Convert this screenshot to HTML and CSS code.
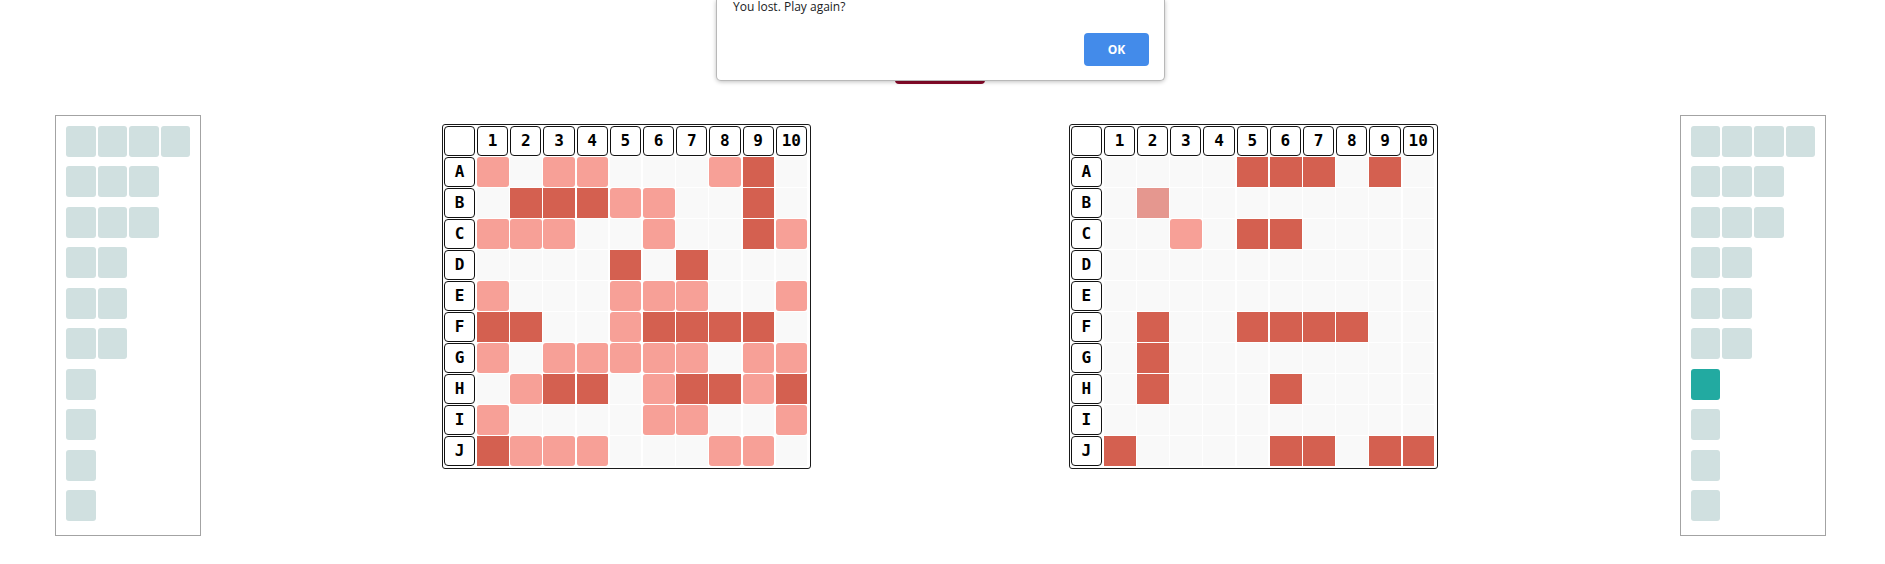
FILE: index.html
```html
<!DOCTYPE html>
<html>
<head>
<meta charset="utf-8">
<link rel="stylesheet" href="styles.css">
</head>
<body>
<div class="top"><button class="play">Play</button></div>

<div class="dialog">
  <div class="msg">You lost. Play again?</div>
  <div class="actions"><button class="ok">OK</button></div>
</div>

<div class="main">
  <div class="panel">
    <div class="ship"><i></i><i></i><i></i><i></i></div>
    <div class="ship"><i></i><i></i><i></i></div>
    <div class="ship"><i></i><i></i><i></i></div>
    <div class="ship"><i></i><i></i></div>
    <div class="ship"><i></i><i></i></div>
    <div class="ship"><i></i><i></i></div>
    <div class="ship"><i></i></div>
    <div class="ship"><i></i></div>
    <div class="ship"><i></i></div>
    <div class="ship"><i></i></div>
  </div>

  <div class="board board-left">
    <div class="hd"></div><div class="hd">1</div><div class="hd">2</div><div class="hd">3</div><div class="hd">4</div><div class="hd">5</div><div class="hd">6</div><div class="hd">7</div><div class="hd">8</div><div class="hd">9</div><div class="hd">10</div>
    <div class="hd">A</div><div class="c m"></div><div class="c"></div><div class="c m"></div><div class="c m"></div><div class="c"></div><div class="c"></div><div class="c"></div><div class="c m"></div><div class="c h"></div><div class="c"></div>
    <div class="hd">B</div><div class="c"></div><div class="c h"></div><div class="c h"></div><div class="c h"></div><div class="c m"></div><div class="c m"></div><div class="c"></div><div class="c"></div><div class="c h"></div><div class="c"></div>
    <div class="hd">C</div><div class="c m"></div><div class="c m"></div><div class="c m"></div><div class="c"></div><div class="c"></div><div class="c m"></div><div class="c"></div><div class="c"></div><div class="c h"></div><div class="c m"></div>
    <div class="hd">D</div><div class="c"></div><div class="c"></div><div class="c"></div><div class="c"></div><div class="c h"></div><div class="c"></div><div class="c h"></div><div class="c"></div><div class="c"></div><div class="c"></div>
    <div class="hd">E</div><div class="c m"></div><div class="c"></div><div class="c"></div><div class="c"></div><div class="c m"></div><div class="c m"></div><div class="c m"></div><div class="c"></div><div class="c"></div><div class="c m"></div>
    <div class="hd">F</div><div class="c h"></div><div class="c h"></div><div class="c"></div><div class="c"></div><div class="c m"></div><div class="c h"></div><div class="c h"></div><div class="c h"></div><div class="c h"></div><div class="c"></div>
    <div class="hd">G</div><div class="c m"></div><div class="c"></div><div class="c m"></div><div class="c m"></div><div class="c m"></div><div class="c m"></div><div class="c m"></div><div class="c"></div><div class="c m"></div><div class="c m"></div>
    <div class="hd">H</div><div class="c"></div><div class="c m"></div><div class="c h"></div><div class="c h"></div><div class="c"></div><div class="c m"></div><div class="c h"></div><div class="c h"></div><div class="c m"></div><div class="c h"></div>
    <div class="hd">I</div><div class="c m"></div><div class="c"></div><div class="c"></div><div class="c"></div><div class="c"></div><div class="c m"></div><div class="c m"></div><div class="c"></div><div class="c"></div><div class="c m"></div>
    <div class="hd">J</div><div class="c h"></div><div class="c m"></div><div class="c m"></div><div class="c m"></div><div class="c"></div><div class="c"></div><div class="c"></div><div class="c m"></div><div class="c m"></div><div class="c"></div>
  </div>

  <div class="board board-right">
    <div class="hd"></div><div class="hd">1</div><div class="hd">2</div><div class="hd">3</div><div class="hd">4</div><div class="hd">5</div><div class="hd">6</div><div class="hd">7</div><div class="hd">8</div><div class="hd">9</div><div class="hd">10</div>
    <div class="hd">A</div><div class="c"></div><div class="c"></div><div class="c"></div><div class="c"></div><div class="c h"></div><div class="c h"></div><div class="c h"></div><div class="c"></div><div class="c h"></div><div class="c"></div>
    <div class="hd">B</div><div class="c"></div><div class="c s"></div><div class="c"></div><div class="c"></div><div class="c"></div><div class="c"></div><div class="c"></div><div class="c"></div><div class="c"></div><div class="c"></div>
    <div class="hd">C</div><div class="c"></div><div class="c"></div><div class="c m"></div><div class="c"></div><div class="c h"></div><div class="c h"></div><div class="c"></div><div class="c"></div><div class="c"></div><div class="c"></div>
    <div class="hd">D</div><div class="c"></div><div class="c"></div><div class="c"></div><div class="c"></div><div class="c"></div><div class="c"></div><div class="c"></div><div class="c"></div><div class="c"></div><div class="c"></div>
    <div class="hd">E</div><div class="c"></div><div class="c"></div><div class="c"></div><div class="c"></div><div class="c"></div><div class="c"></div><div class="c"></div><div class="c"></div><div class="c"></div><div class="c"></div>
    <div class="hd">F</div><div class="c"></div><div class="c h"></div><div class="c"></div><div class="c"></div><div class="c h"></div><div class="c h"></div><div class="c h"></div><div class="c h"></div><div class="c"></div><div class="c"></div>
    <div class="hd">G</div><div class="c"></div><div class="c h"></div><div class="c"></div><div class="c"></div><div class="c"></div><div class="c"></div><div class="c"></div><div class="c"></div><div class="c"></div><div class="c"></div>
    <div class="hd">H</div><div class="c"></div><div class="c h"></div><div class="c"></div><div class="c"></div><div class="c"></div><div class="c h"></div><div class="c"></div><div class="c"></div><div class="c"></div><div class="c"></div>
    <div class="hd">I</div><div class="c"></div><div class="c"></div><div class="c"></div><div class="c"></div><div class="c"></div><div class="c"></div><div class="c"></div><div class="c"></div><div class="c"></div><div class="c"></div>
    <div class="hd">J</div><div class="c h"></div><div class="c"></div><div class="c"></div><div class="c"></div><div class="c"></div><div class="c h"></div><div class="c h"></div><div class="c"></div><div class="c h"></div><div class="c h"></div>
  </div>

  <div class="panel panel-right">
    <div class="ship"><i></i><i></i><i></i><i></i></div>
    <div class="ship"><i></i><i></i><i></i></div>
    <div class="ship"><i></i><i></i><i></i></div>
    <div class="ship"><i></i><i></i></div>
    <div class="ship"><i></i><i></i></div>
    <div class="ship"><i></i><i></i></div>
    <div class="ship"><i class="active"></i></div>
    <div class="ship"><i></i></div>
    <div class="ship"><i></i></div>
    <div class="ship"><i></i></div>
  </div>
</div>
</body>
</html>
```

FILE: styles.css
```css
* { box-sizing: border-box; }

html, body {
  margin: 0;
  padding: 0;
  background: #ffffff;
}

body {
  width: 1885px;
  height: 564px;
  overflow: hidden;
  position: relative;
  font-family: "Open Sans", "Noto Sans", sans-serif;
}

.top {
  display: flex;
  justify-content: center;
  padding-top: 47px;
}

.play {
  width: 90px;
  height: 37px;
  margin-right: 5px;
  border: none;
  border-radius: 4px;
  background: #890a2a;
  color: #fff;
  font-family: "Open Sans", sans-serif;
  font-size: 14px;
}

.dialog {
  position: absolute;
  left: 716px;
  top: 0;
  width: 449px;
  height: 81px;
  background: #ffffff;
  border: 1px solid #b8b8b8;
  border-top: none;
  border-radius: 0 0 5px 5px;
  box-shadow: 0 1px 4px rgba(0, 0, 0, 0.25);
  padding: 0 15px 0 15px;
  display: flex;
  flex-direction: column;
  z-index: 10;
}

.msg {
  font-size: 12px;
  line-height: 14px;
  color: #202124;
  padding-left: 1px;
}

.actions {
  display: flex;
  justify-content: flex-end;
  margin-top: 19px;
}

.ok {
  width: 65px;
  height: 33px;
  border: none;
  border-radius: 4px;
  background: #438bea;
  color: #ffffff;
  font-family: "Open Sans", sans-serif;
  font-weight: 700;
  font-size: 12px;
  padding: 0;
}

.main {
  display: flex;
  align-items: flex-start;
  padding-left: 55px;
  margin-top: 31px;
}

.panel {
  width: 146px;
  height: 421px;
  border: 1px solid #a3a3a3;
  padding: 10px 0 0 10px;
  display: flex;
  flex-direction: column;
  gap: 9.45px;
}

.panel-right {
  margin-left: 242px;
}

.ship {
  display: flex;
  gap: 2px;
}

.ship i {
  display: block;
  width: 29.6px;
  height: 31px;
  border-radius: 3px;
  background: #d0e0e0;
}

.ship i.active {
  background: #22aaa1;
}

.board {
  margin-top: 9px;
  border: 1px solid #1a1a1a;
  border-radius: 3px;
  padding: 1px;
  display: grid;
  grid-template-columns: 33px repeat(10, 33.2px);
  grid-template-rows: repeat(11, 31px);
  background: #ffffff;
}

.board-left {
  margin-left: 241px;
}

.board-right {
  margin-left: 258px;
}

.hd {
  margin: 0 2px 1.5px 0;
  border: 1.5px solid #111111;
  border-radius: 4px;
  display: flex;
  align-items: center;
  justify-content: center;
  font-family: "DejaVu Sans Mono", "Liberation Mono", monospace;
  font-weight: 700;
  font-size: 16px;
  color: #000;
  background: #ffffff;
}

.c {
  margin: 0 1.5px 1.5px 0;
  background: #f9f9f9;
}

.c.h {
  background: #d46050;
}

.c.m {
  background: #f7a097;
  border-radius: 3px;
}

.c.s {
  background: #e5978f;
}
```
